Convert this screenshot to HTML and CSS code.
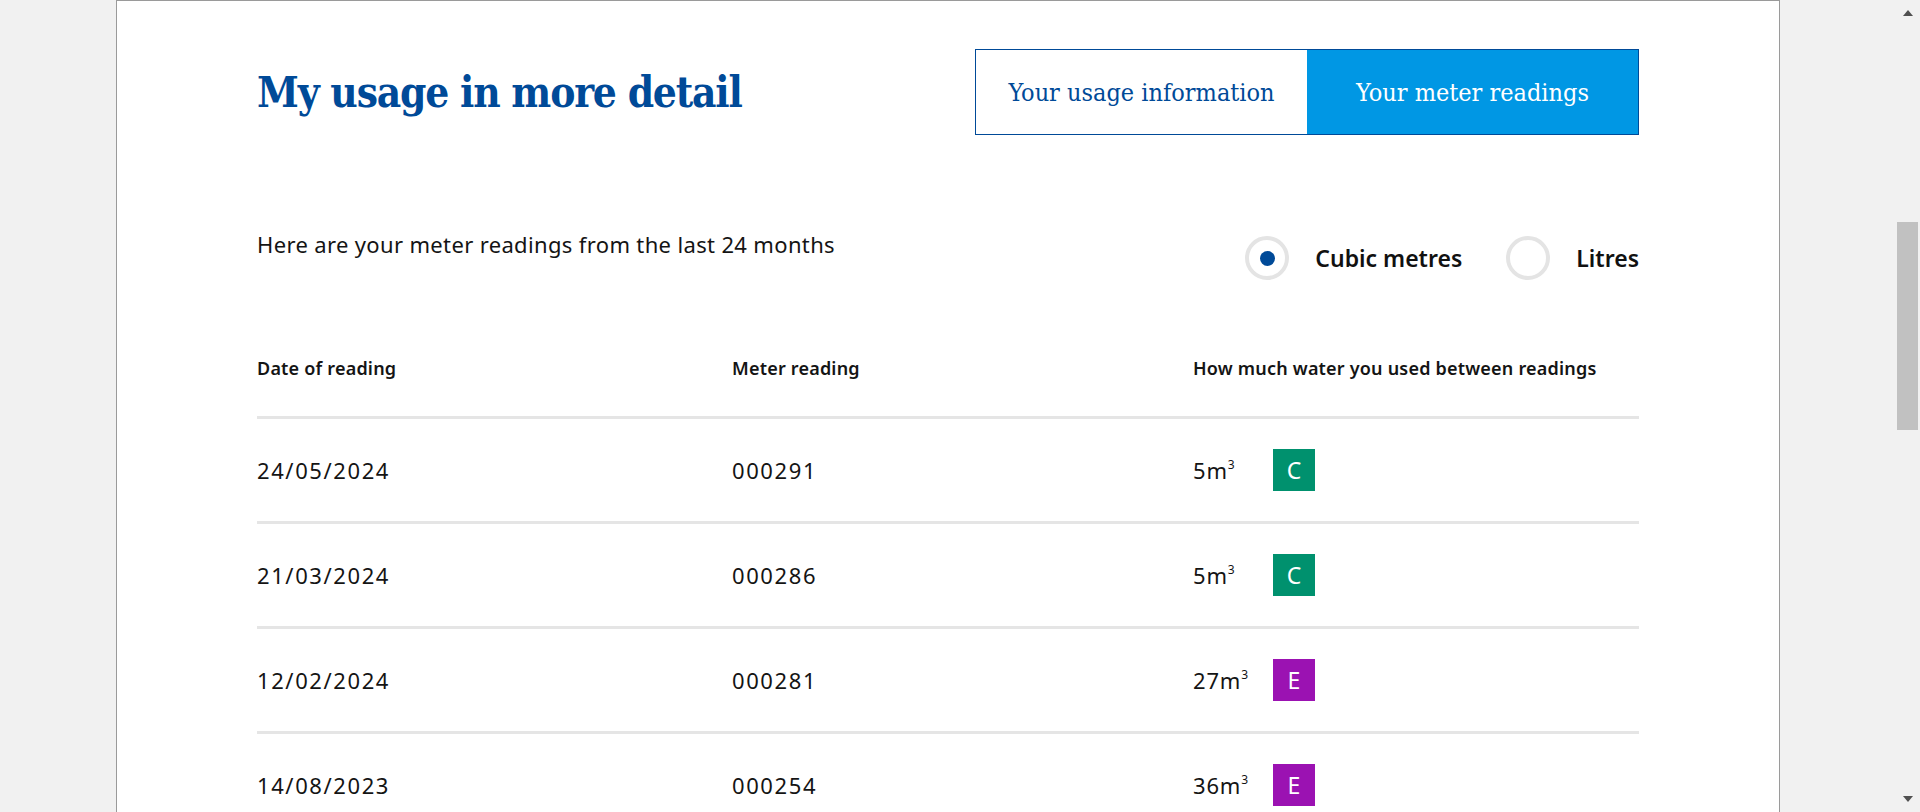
FILE: index.html
```html
<!DOCTYPE html>
<html lang="en">
<head>
<meta charset="utf-8">
<title>My usage in more detail</title>
<link rel="stylesheet" href="styles.css">
</head>
<body>
<div class="viewport">
  <main class="card">
    <header class="head">
      <h1 class="title">My usage in more detail</h1>
      <nav class="tabs">
        <a class="tab">Your usage information</a>
        <a class="tab tab-active">Your meter readings</a>
      </nav>
    </header>

    <section class="intro">
      <p class="lead">Here are your meter readings from the last 24 months</p>
      <div class="units">
        <label class="radio"><span class="ring ring-on"><span class="dot"></span></span><span class="radio-text">Cubic metres</span></label>
        <label class="radio"><span class="ring"></span><span class="radio-text">Litres</span></label>
      </div>
    </section>

    <div class="table">
      <div class="trow thead">
        <div class="cell">Date of reading</div>
        <div class="cell">Meter reading</div>
        <div class="cell">How much water you used between readings</div>
      </div>
      <div class="trow">
        <div class="cell">24/05/2024</div>
        <div class="cell">000291</div>
        <div class="cell usage"><span class="amt">5m<sup>3</sup></span><span class="badge badge-c">C</span></div>
      </div>
      <div class="trow">
        <div class="cell">21/03/2024</div>
        <div class="cell">000286</div>
        <div class="cell usage"><span class="amt">5m<sup>3</sup></span><span class="badge badge-c">C</span></div>
      </div>
      <div class="trow">
        <div class="cell">12/02/2024</div>
        <div class="cell">000281</div>
        <div class="cell usage"><span class="amt">27m<sup>3</sup></span><span class="badge badge-e">E</span></div>
      </div>
      <div class="trow">
        <div class="cell">14/08/2023</div>
        <div class="cell">000254</div>
        <div class="cell usage"><span class="amt">36m<sup>3</sup></span><span class="badge badge-e">E</span></div>
      </div>
    </div>
  </main>
</div>
<div class="scrollbar">
  <div class="sb-btn"><span class="arrow-up"></span></div>
  <div class="sb-track"><div class="sb-thumb"></div></div>
  <div class="sb-btn"><span class="arrow-down"></span></div>
</div>
</body>
</html>
```

FILE: styles.css
```css
* { box-sizing: border-box; }

html, body {
  margin: 0;
  height: 812px;
  overflow: hidden;
}

body {
  display: flex;
  background: #f1f1f1;
  font-family: "Noto Sans", "Open Sans", sans-serif;
  color: #141414;
}

.viewport {
  flex: 1;
  min-width: 0;
}

.card {
  width: 1664px;
  margin: 0 0 0 116px;
  min-height: 812px;
  background: #fff;
  border: 1px solid #9a9a9a;
  border-bottom: none;
  padding: 48px 140px 0;
}

/* header */
.head {
  display: flex;
  justify-content: space-between;
  align-items: center;
}

.title {
  margin: 0;
  font-family: "DejaVu Serif", serif;
  font-stretch: condensed;
  font-weight: 700;
  font-size: 42px;
  letter-spacing: -1.2px;
  color: #004a98;
}

.tabs {
  display: flex;
  border: 1px solid #004a98;
  height: 86px;
}

.tab {
  width: 331px;
  display: flex;
  align-items: center;
  justify-content: center;
  font-family: "DejaVu Serif", serif;
  font-stretch: condensed;
  font-size: 25px;
  letter-spacing: 0;
  color: #004a98;
  background: #fff;
}

.tab-active {
  background: #0097e4;
  color: #fff;
}

/* intro */
.intro {
  display: flex;
  justify-content: space-between;
  align-items: flex-start;
  margin-top: 95px;
}

.lead {
  margin: 0;
  font-size: 22px;
  letter-spacing: 0.35px;
  line-height: 28px;
}

.units {
  display: flex;
  gap: 44px;
  margin-top: 6px;
}

.radio {
  display: flex;
  align-items: center;
  gap: 26px;
}

.ring {
  width: 44px;
  height: 44px;
  border-radius: 50%;
  border: 4px solid #e4e4e4;
  display: flex;
  align-items: center;
  justify-content: center;
}

.dot {
  width: 15px;
  height: 15px;
  border-radius: 50%;
  background: #004a98;
}

.radio-text {
  font-size: 23px;
  font-weight: 600;
  color: #111;
}

/* table */
.table {
  margin-top: 76px;
}

.trow {
  display: grid;
  grid-template-columns: 475px 461px 1fr;
  align-items: center;
  height: 105px;
  border-top: 3px solid #e5e5e5;
  font-size: 22px;
  letter-spacing: 1.6px;
}

.trow.thead {
  height: auto;
  border-top: none;
  padding-bottom: 36px;
  font-size: 18px;
  font-weight: 600;
  letter-spacing: 0.2px;
  line-height: 24px;
}

.usage {
  display: flex;
  align-items: center;
}

.amt {
  width: 80px;
  letter-spacing: 0.8px;
}

.amt sup {
  font-size: 12px;
  vertical-align: 10px;
  line-height: 0;
  letter-spacing: 0;
}

.badge {
  width: 42px;
  height: 42px;
  display: flex;
  align-items: center;
  justify-content: center;
  color: #fff;
  font-family: "Noto Sans", sans-serif;
  font-size: 23px;
  letter-spacing: 0;
}

.badge-c { background: #00916e; }
.badge-e { background: #9b12b2; }

/* scrollbar */
.scrollbar {
  width: 24px;
  flex: none;
  display: flex;
  flex-direction: column;
  background: #f1f1f1;
}

.sb-btn {
  height: 26px;
  display: flex;
  align-items: center;
  justify-content: center;
}

.arrow-up {
  width: 0;
  height: 0;
  border-left: 5.5px solid transparent;
  border-right: 5.5px solid transparent;
  border-bottom: 6px solid #505050;
}

.arrow-down {
  width: 0;
  height: 0;
  border-left: 5.5px solid transparent;
  border-right: 5.5px solid transparent;
  border-top: 6px solid #505050;
}

.sb-track {
  flex: 1;
  padding: 196px 2px 0 1px;
}

.sb-thumb {
  height: 208px;
  background: #c1c1c1;
}
```
